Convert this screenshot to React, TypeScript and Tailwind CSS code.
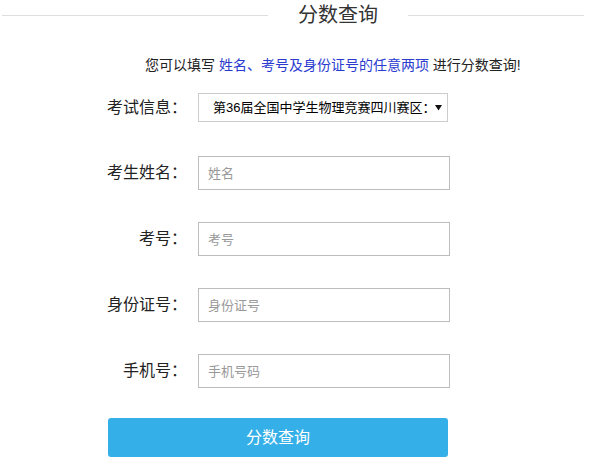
import React from "react";

const fields = [
  { label: "考生姓名：", placeholder: "姓名" },
  { label: "考号：", placeholder: "考号" },
  { label: "身份证号：", placeholder: "身份证号" },
  { label: "手机号：", placeholder: "手机号码" },
];

export default function App() {
  return (
    <div className="w-[611px] h-[463px] overflow-hidden bg-white text-[#333] font-['Liberation_Sans','Noto_Sans_CJK_SC',sans-serif]">
      {/* Title with side rules */}
      <div className="flex items-center h-[30px] pl-[2px]">
        <div className="w-[266px] h-px bg-[#dedede]" />
        <h1 className="w-[140px] text-center text-[20px] leading-[30px] font-normal">分数查询</h1>
        <div className="w-[176px] h-px bg-[#dedede]" />
      </div>

      <p className="mt-[25px] pl-[145px] text-[14px] leading-[20px] text-[#222] whitespace-nowrap">
        您可以填写 <span className="text-[#2b3bd0]">姓名、考号及身份证号的任意两项</span> 进行分数查询!
      </p>

      <form className="mt-[18px] pl-[97px] flex flex-col">
        <div className="flex items-center h-[29px]">
          <label className="w-[90px] text-right text-[16px] text-[#222]">考试信息：</label>
          <div className="relative ml-[11px] w-[250px] h-[29px]">
            <select className="w-full h-full appearance-none border border-[#cccccc] bg-white pl-[14px] pr-[14px] text-[13px] text-black outline-none">
              <option>第36届全国中学生物理竞赛四川赛区：复赛成绩</option>
            </select>
            <svg className="absolute right-[6px] top-[11px] pointer-events-none" width="7" height="7" viewBox="0 0 7 7">
              <path d="M0 1h7L3.5 6.5z" fill="#111" />
            </svg>
          </div>
        </div>

        {fields.map((f, i) => (
          <div key={f.label} className={i === 0 ? "flex items-center mt-[34px]" : "flex items-center mt-[32px]"}>
            <label className="w-[90px] text-right text-[16px] text-[#222]">{f.label}</label>
            <input
              className="ml-[11px] w-[252px] h-[34px] border border-[#bdbdbd] pl-[9px] text-[13px] outline-none placeholder:text-[#999]"
              placeholder={f.placeholder}
            />
          </div>
        ))}

        <button
          type="button"
          className="mt-[30px] ml-[11px] w-[340px] h-[39px] rounded-[3px] bg-[#35afe8] text-white text-[16px]"
        >
          分数查询
        </button>
      </form>
    </div>
  );
}
